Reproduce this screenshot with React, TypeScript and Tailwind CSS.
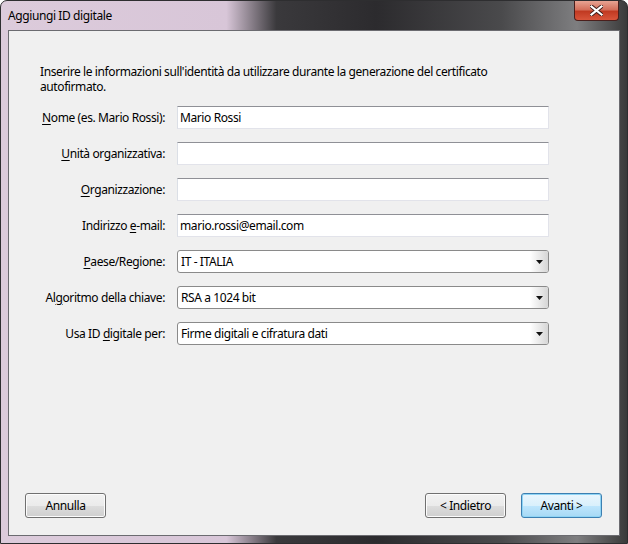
import React from 'react'

const font = { fontFamily: '"Noto Sans", "Open Sans", sans-serif' }

function Label({ pre, u, post }: { pre?: string; u: string; post: string }) {
  return (
    <span className="justify-self-end whitespace-nowrap text-right text-[12px] tracking-[-0.4px] text-black leading-[15px]">
      {pre}
      <span className="underline underline-offset-2">{u}</span>
      {post}
    </span>
  )
}

function TextBox({ value }: { value?: string }) {
  return (
    <div className="h-[23px] w-[372px] bg-white border border-[#e2e3ea] border-t-[#8f9096] border-l-[#dbdfe6] flex items-center px-[2px] text-[12px] tracking-[-0.4px] text-black">
      {value}
    </div>
  )
}

function Select({ value }: { value: string }) {
  return (
    <div className="h-[23px] w-[372px] bg-white border border-[#8a8a8a] rounded-[3px] flex items-center text-[12px] tracking-[-0.4px] text-black overflow-hidden">
      <span className="flex-1 pl-[3px]">{value}</span>
      <div className="w-[18px] h-full bg-[linear-gradient(to_right,#ffffff,#d6d6d6)] flex items-center justify-center">
        <svg width="7" height="4" viewBox="0 0 7 4">
          <path d="M0 0h7L3.5 4z" fill="#111" />
        </svg>
      </div>
    </div>
  )
}

function Button({ children, focused }: { children: React.ReactNode; focused?: boolean }) {
  return (
    <div
      className={
        'w-[81px] h-[25px] rounded-[3px] flex items-center justify-center text-[12px] tracking-[-0.4px] text-black ' +
        (focused
          ? 'border border-[#3c7fb1] bg-[linear-gradient(to_bottom,#eaf6fd_0%,#d9f0fc_50%,#bee6fd_51%,#a7d9f5_100%)] shadow-[inset_0_0_0_1px_#8fd4f5]'
          : 'border border-[#707070] bg-[linear-gradient(to_bottom,#f2f2f2_0%,#ebebeb_50%,#dddddd_51%,#cfcfcf_100%)] shadow-[inset_0_0_0_1px_#fcfcfc]')
      }
    >
      {children}
    </div>
  )
}

export default function App() {
  return (
    <div
      style={font}
      className="w-[628px] h-[544px] flex flex-col border border-[#2e2e30] rounded-t-[7px] px-[7px] pb-[7px] bg-[linear-gradient(to_right,#dccbdb_0%,#d8c6d8_36%,#3a393c_44%,#2c2b2e_60%,#4a4a4c_80%,#7e7e80_92%,#3a3a3a_100%)]"
    >
      <div className="h-[29px] flex items-start justify-between">
        <span className="text-[12px] tracking-[-0.4px] text-black mt-[7px] leading-[15px]">Aggiungi ID digitale</span>
        <div className="w-[45px] h-[20px] mr-[1px] rounded-b-[4px] border border-t-0 border-[#4a1f1c] bg-[linear-gradient(to_bottom,#e8a493_0%,#d4705c_45%,#c13a22_55%,#d8553b_100%)] flex items-center justify-center">
          <svg width="13" height="11" viewBox="0 0 13 11">
            <path d="M1.5 1.5l10 8M11.5 1.5l-10 8" stroke="#3a1a16" strokeWidth="4" strokeLinecap="square" />
            <path d="M1.5 1.5l10 8M11.5 1.5l-10 8" stroke="#ffffff" strokeWidth="2.2" strokeLinecap="square" />
          </svg>
        </div>
      </div>

      <div className="flex-1 bg-[#f0f0f0] border border-[#6b6b70] flex flex-col">
        <p className="mt-[33px] ml-[31px] text-[12px] tracking-[-0.4px] leading-[15px] text-black">
          Inserire le informazioni sull'identità da utilizzare durante la generazione del certificato
          <br />
          autofirmato.
        </p>

        <div className="mt-[12px] ml-[31px] grid grid-cols-[125px_372px] gap-x-[12px] gap-y-[13px] items-center">
          <Label u="N" post="ome (es. Mario Rossi):" />
          <TextBox value="Mario Rossi" />
          <Label u="U" post="nità organizzativa:" />
          <TextBox />
          <Label u="O" post="rganizzazione:" />
          <TextBox />
          <Label pre="Indirizzo " u="e" post="-mail:" />
          <TextBox value="mario.rossi@email.com" />
          <Label u="P" post="aese/Regione:" />
          <Select value="IT - ITALIA" />
          <Label pre="Al" u="g" post="oritmo della chiave:" />
          <Select value="RSA a 1024 bit" />
          <Label pre="Usa ID " u="d" post="igitale per:" />
          <Select value="Firme digitali e cifratura dati" />
        </div>

        <div className="mt-auto mb-[17px] ml-[16px] mr-[17px] flex items-center">
          <Button>Annulla</Button>
          <div className="flex-1" />
          <Button>&lt; Indietro</Button>
          <div className="w-[15px]" />
          <Button focused>Avanti &gt;</Button>
        </div>
      </div>
    </div>
  )
}
